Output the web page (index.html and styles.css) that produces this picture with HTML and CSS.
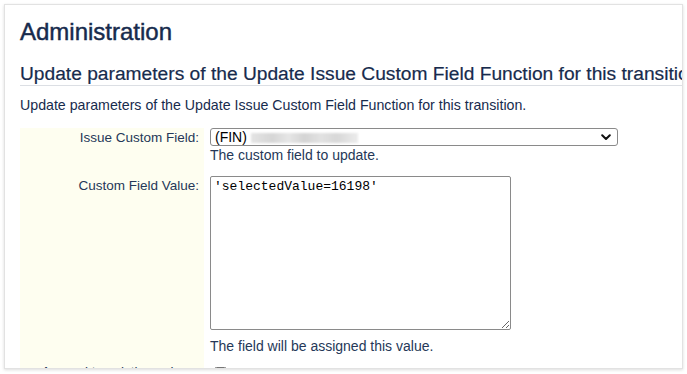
FILE: index.html
```html
<!DOCTYPE html>
<html lang="en">
<head>
<meta charset="utf-8">
<title>Administration</title>
<link rel="stylesheet" href="styles.css">
</head>
<body>
<div class="card">
  <h1 class="title">Administration</h1>
  <h2 class="subtitle">Update parameters of the Update Issue Custom Field Function for this transition</h2>
  <p class="intro">Update parameters of the Update Issue Custom Field Function for this transition.</p>
  <div class="form">
    <div class="label">Issue Custom Field:</div>
    <div class="field">
      <div class="select">
        <span class="select-text">(FIN)</span>
        <span class="redacted"></span>
        <svg class="chev" width="10" height="7" viewBox="0 0 10 7"><path d="M1.2 1.2 L5 5 L8.8 1.2" fill="none" stroke="#111" stroke-width="2" stroke-linecap="round" stroke-linejoin="round"/></svg>
      </div>
      <div class="hint hint-first">The custom field to update.</div>
    </div>
    <div class="label">Custom Field Value:</div>
    <div class="field">
      <textarea class="value" spellcheck="false">'selectedValue=16198'</textarea>
      <div class="hint hint-second">The field will be assigned this value.</div>
    </div>
    <div class="label label-last">Append to existing values:</div>
    <div class="field">
      <input type="checkbox" class="check">
    </div>
  </div>
</div>
</body>
</html>
```
FILE: styles.css
```css
html, body {
  margin: 0;
  padding: 0;
  background: #ffffff;
}
body {
  padding: 4px;
  font-family: "Liberation Sans", Arial, sans-serif;
  color: #172b4d;
}
.card {
  box-sizing: border-box;
  width: 679px;
  height: 365px;
  overflow: hidden;
  background: #ffffff;
  border: 1px solid #e2e2e2;
  box-shadow: 0 1px 3px rgba(0, 0, 0, 0.14);
  padding: 13px 0 0 15px;
}
.title {
  margin: 0;
  font-size: 24px;
  line-height: 28px;
  font-weight: normal;
  color: #172b4d;
  -webkit-text-stroke: 0.45px #172b4d;
}
.subtitle {
  margin: 17px 0 0;
  font-size: 19.2px;
  line-height: 22px;
  font-weight: normal;
  color: #172b4d;
  white-space: nowrap;
  border-bottom: 1px solid #dcdfe4;
  -webkit-text-stroke: 0.2px #172b4d;
}
.intro {
  margin: 9px 0 0;
  font-size: 14.2px;
  line-height: 20px;
  color: #172b4d;
}
.form {
  margin-top: 13px;
  display: grid;
  grid-template-columns: 184px 1fr;
  column-gap: 6px;
}
.label {
  background: #fefef0;
  text-align: right;
  padding-right: 5px;
  font-size: 13.5px;
  line-height: 19px;
  color: #253858;
}
.label-last {
  line-height: 16px;
}
.field {
  font-size: 14px;
  line-height: 18px;
}
.select {
  box-sizing: border-box;
  width: 408px;
  height: 18px;
  border: 1px solid #8a8a8a;
  border-radius: 3px;
  display: flex;
  align-items: center;
  padding: 0 6px 0 4px;
  background: #fff;
  color: #000;
}
.select-text {
  font-size: 14px;
  line-height: 16px;
}
.redacted {
  width: 107px;
  height: 10px;
  margin-left: 4px;
  margin-top: 2px;
  background: linear-gradient(90deg, #e4e4e4 0%, #d6d6d6 20%, #e6e6e6 35%, #d4d4d4 50%, #e2e2e2 65%, #d8d8d8 80%, #ececec 100%);
  filter: blur(1px);
}
.chev {
  margin-left: auto;
}
.hint {
  color: #253858;
  font-size: 14px;
  line-height: 18px;
}
.hint-first {
  margin-bottom: 12px;
}
.value {
  display: block;
  box-sizing: border-box;
  width: 301px;
  height: 154px;
  margin: 0;
  border: 1px solid #8a8a8a;
  border-radius: 2px;
  padding: 2px 3px;
  font-family: "Liberation Mono", "Courier New", monospace;
  font-size: 13px;
  line-height: 16px;
  color: #000;
  background: #fff;
}
.hint-second {
  margin-top: 7px;
  margin-bottom: 9px;
}
.check {
  margin: 3px 0 0 4px;
  width: 13px;
  height: 13px;
}
```
